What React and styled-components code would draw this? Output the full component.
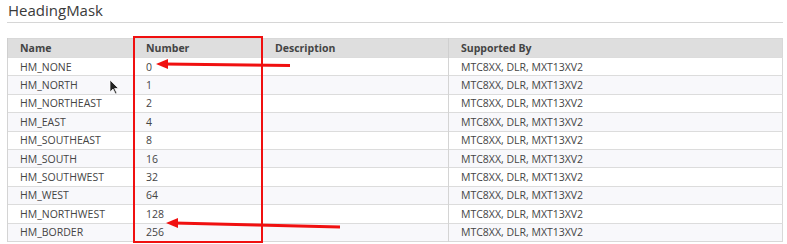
import React from 'react';
import styled, { createGlobalStyle } from 'styled-components';

const GlobalStyle = createGlobalStyle`
  body {
    margin: 0;
    background: #fff;
    font-family: "Open Sans", "DejaVu Sans", sans-serif;
    color: #333;
  }
`

const Page = styled.div`
  position: relative;
  width: 787px;
  height: 244px;
  padding: 0 4px 0 7px;
  box-sizing: border-box;
  overflow: hidden;
`

const Title = styled.h2`
  margin: 0;
  padding: 1px 0 3px 1px;
  font-size: 15px;
  font-weight: 400;
  line-height: 18px;
  color: #3a3a3a;
  border-bottom: 1px solid #d6d6d6;
`

const Table = styled.table`
  margin-top: 15px;
  width: 776px;
  table-layout: fixed;
  border-collapse: collapse;
  font-size: 10.5px;
  line-height: 14px;
  color: #444;
  border: 1px solid #d8d8d8;
`

const Head = styled.th`
  background: #dedede;
  text-align: left;
  font-weight: 700;
  height: 18px;
  padding: 0 0 0 12px;
  border-left: 1px solid #cfcfcf;
  width: ${props => props.$w ? `${props.$w}px` : 'auto'};
`

const Row = styled.tr`
  background: ${props => props.$odd ? '#f8f8fb' : '#fff'};
`

const Cell = styled.td`
  height: 17.4px;
  padding: 0 0 0 12px;
  border-top: 1px solid #dcdcdc;
  border-left: 1px solid #d4d4d4;
  white-space: nowrap;
  overflow: hidden;
`

const Overlay = styled.svg`
  position: absolute;
  left: 0;
  top: 0;
  pointer-events: none;
`

const rows = [
  ['HM_NONE', 0],
  ['HM_NORTH', 1],
  ['HM_NORTHEAST', 2],
  ['HM_EAST', 4],
  ['HM_SOUTHEAST', 8],
  ['HM_SOUTH', 16],
  ['HM_SOUTHWEST', 32],
  ['HM_WEST', 64],
  ['HM_NORTHWEST', 128],
  ['HM_BORDER', 256],
]

const App = () => {
  return (
    <Page>
      <GlobalStyle />
      <Title>HeadingMask</Title>
      <Table>
        <colgroup>
          <col style={{ width: 126 }} />
          <col style={{ width: 129 }} />
          <col style={{ width: 186 }} />
          <col />
        </colgroup>
        <thead>
          <tr>
            <Head>Name</Head>
            <Head>Number</Head>
            <Head>Description</Head>
            <Head>Supported By</Head>
          </tr>
        </thead>
        <tbody>
          {rows.map((item, index) => <Row key={index} $odd={index % 2 === 1}>
            <Cell>{item[0]}</Cell>
            <Cell>{item[1]}</Cell>
            <Cell></Cell>
            <Cell>MTC8XX, DLR, MXT13XV2</Cell>
          </Row>)}
        </tbody>
      </Table>
      <Overlay width="787" height="244">
        <rect x="134" y="37" width="128" height="205" fill="none" stroke="#f01010" strokeWidth="2" />
        <line x1="290" y1="65.5" x2="164" y2="64" stroke="#f01010" strokeWidth="3" />
        <polygon points="156,64 168,59 168,69" fill="#f01010" />
        <line x1="340" y1="227" x2="174" y2="223" stroke="#f01010" strokeWidth="3" />
        <polygon points="166,223 178,218 178,228" fill="#f01010" />
      </Overlay>
      {/* mouse pointer */}
      <Overlay width="787" height="244">
        <path d="M110 80 L110 92 L113 89 L115.5 94 L117 93.3 L114.6 88.5 L118.5 88.5 Z" fill="#222" stroke="#fff" strokeWidth="0.7" />
      </Overlay>
    </Page>
  );
}

export default App;
